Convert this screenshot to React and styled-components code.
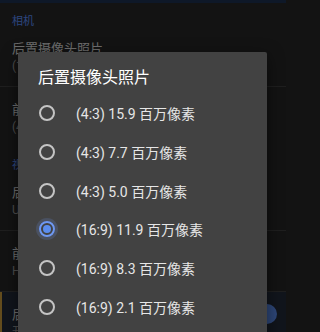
import React from 'react';
import styled, { createGlobalStyle } from 'styled-components';

const GlobalStyle = createGlobalStyle`
  html, body {
    margin: 0;
    padding: 0;
    background: #131313;
  }
  body {
    font-family: Roboto, "Noto Sans CJK SC", "Noto Sans", sans-serif;
  }
`;

const Screen = styled.div`
  position: relative;
  width: 286px;
  height: 332px;
  overflow: hidden;
  background: #262626;
`;

const StatusStrip = styled.div`
  height: 3px;
  background: #1c3050;
`;

const Category = styled.div`
  padding: 12px 12px 0;
  font-size: 11px;
  line-height: 14px;
  color: #5a8cf8;
`;

const Item = styled.div`
  position: relative;
  padding: ${p => p.$top}px 12px 11px;
  border-bottom: ${p => (p.$divider ? '1px solid #3e3e3e' : 'none')};
  background: ${p => (p.$active ? '#232a38' : 'transparent')};
  border-left: ${p => (p.$active ? '2px solid #c99a3c' : 'none')};
  padding-left: ${p => (p.$active ? 10 : 12)}px;
`;

const ItemTitle = styled.div`
  font-size: 13px;
  line-height: 18px;
  color: #dadada;
  white-space: nowrap;
`;

const ItemSub = styled.div`
  font-size: 12px;
  line-height: 17px;
  color: #9a9a9a;
  white-space: nowrap;
`;

const Switch = styled.div`
  position: absolute;
  right: 9px;
  top: 12px;
  width: 20px;
  height: 20px;
  border-radius: 50%;
  background: #5b8def;
`;

const Scrim = styled.div`
  position: absolute;
  inset: 0;
  background: rgba(0, 0, 0, 0.5);
`;

const Dialog = styled.div`
  position: absolute;
  left: 18px;
  top: 52px;
  width: 249px;
  height: 320px;
  background: #424242;
  border-radius: 2px;
  box-shadow: 0 4px 16px rgba(0, 0, 0, 0.5);
`;

const DialogTitle = styled.div`
  padding: 14px 20px 4px;
  font-size: 16px;
  line-height: 24px;
  color: #ffffff;
`;

const Option = styled.div`
  display: flex;
  align-items: center;
  height: 38.7px;
  padding-left: 21px;
  gap: 21px;
`;

const Radio = styled.span`
  box-sizing: border-box;
  width: 16px;
  height: 16px;
  flex: none;
  border-radius: 50%;
  border: 2px solid ${p => (p.$checked ? '#6e98f2' : '#c4c4c4')};
  display: flex;
  align-items: center;
  justify-content: center;
  box-shadow: ${p => (p.$checked ? '0 0 0 3px rgba(110, 150, 240, 0.18)' : 'none')};

  &::after {
    content: '';
    display: ${p => (p.$checked ? 'block' : 'none')};
    width: 8px;
    height: 8px;
    border-radius: 50%;
    background: #5b8def;
  }
`;

const OptionLabel = styled.span`
  font-size: 14px;
  color: #e6e6e6;
  white-space: nowrap;
`;

const options = [
  { ratio: '4:3', mp: '15.9' },
  { ratio: '4:3', mp: '7.7' },
  { ratio: '4:3', mp: '5.0' },
  { ratio: '16:9', mp: '11.9', checked: true },
  { ratio: '16:9', mp: '8.3' },
  { ratio: '16:9', mp: '2.1' },
];

export default function App() {
  return (
    <>
      <GlobalStyle />
      <Screen>
        <StatusStrip />
        <Category>相机</Category>
        <Item $top={11} $divider>
          <ItemTitle>后置摄像头照片</ItemTitle>
          <ItemSub>(16:9) 11.9 百万像素</ItemSub>
        </Item>
        <Item $top={14}>
          <ItemTitle>前置摄像头照片</ItemTitle>
          <ItemSub>(4:3) 5.0 百万像素</ItemSub>
        </Item>
        <Category>视频</Category>
        <Item $top={11} $divider>
          <ItemTitle>后置摄像头视频</ItemTitle>
          <ItemSub>UHD 4K (30 fps)</ItemSub>
        </Item>
        <Item $top={14} $divider>
          <ItemTitle>前置摄像头视频</ItemTitle>
          <ItemSub>HD 1080p</ItemSub>
        </Item>
        <Item $top={14} $active>
          <ItemTitle>后置摄像头防抖</ItemTitle>
          <ItemSub>开启</ItemSub>
          <Switch />
        </Item>
        <Scrim />
        <Dialog>
          <DialogTitle>后置摄像头照片</DialogTitle>
          {options.map(o => (
            <Option key={o.ratio + o.mp}>
              <Radio $checked={o.checked} />
              <OptionLabel>({o.ratio}) {o.mp} 百万像素</OptionLabel>
            </Option>
          ))}
        </Dialog>
      </Screen>
    </>
  );
}
